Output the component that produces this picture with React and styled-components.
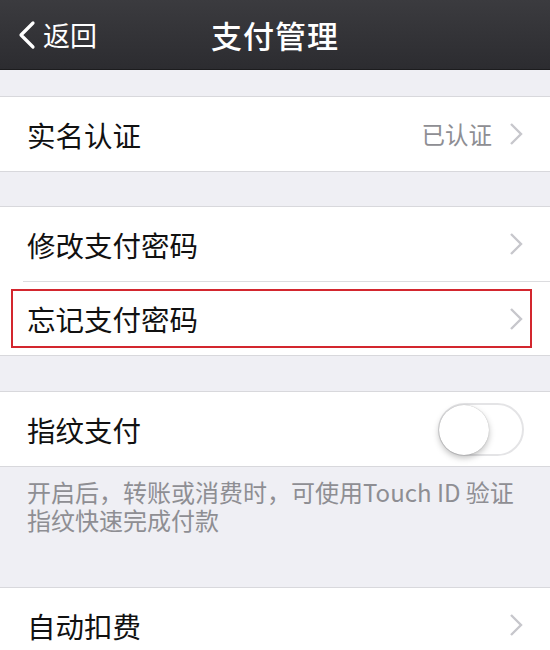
import styled, { createGlobalStyle } from "styled-components";

const GlobalStyle = createGlobalStyle`
  html, body {
    margin: 0;
    padding: 0;
    background: #efeff4;
  }
  body {
    font-family: "Noto Sans CJK SC", "Noto Sans", sans-serif;
  }
`;

const Page = styled.div`
  width: 550px;
  height: 650px;
  overflow: hidden;
  background: #efeff4;
`;

const NavBar = styled.header`
  height: 69px;
  border-bottom: 1px solid #1c1c1e;
  background: linear-gradient(#3b3b3f, #2c2c30);
  display: grid;
  grid-template-columns: 1fr auto 1fr;
  align-items: center;
  color: #fff;
`;

const BackButton = styled.div`
  display: flex;
  align-items: center;
  gap: 6px;
  padding-left: 17px;
  font-size: 27px;
  line-height: 1;
`;

const Title = styled.h1`
  margin: 0;
  font-size: 31px;
  font-weight: 500;
  letter-spacing: 1px;
`;

const Gap = styled.div`
  height: ${(p) => p.$h}px;
`;

const Group = styled.section`
  background: #fff;
  border-top: 1px solid #d8d8dc;
  border-bottom: 1px solid #d8d8dc;
`;

const Row = styled.div`
  position: relative;
  height: 74px;
  display: flex;
  align-items: center;
  padding: 0 26px 0 27px;
  box-sizing: border-box;
  & + & {
    border-top: 1px solid transparent;
  }
  & + &::before {
    content: "";
    position: absolute;
    top: -1px;
    left: 23px;
    right: 0;
    height: 1px;
    background: #dcdcdf;
  }
`;

const Label = styled.span`
  flex: 1;
  font-size: 28.5px;
  color: #111;
`;

const Detail = styled.span`
  font-size: 23.5px;
  color: #8e8e93;
  margin-right: 17px;
`;

const Chevron = styled.svg`
  display: block;
  flex: none;
  margin-right: 1px;
`;

const Toggle = styled.div`
  position: relative;
  flex: none;
  width: 86px;
  height: 53px;
  box-sizing: border-box;
  border: 2px solid #e4e4e6;
  border-radius: 27px;
  background: #fff;
`;

const Knob = styled.div`
  position: absolute;
  left: -1px;
  top: 0px;
  width: 50px;
  height: 50px;
  border-radius: 50%;
  background: #fff;
  box-shadow: 0 3px 6px rgba(0, 0, 0, 0.25), 0 0 1px rgba(0, 0, 0, 0.3);
`;

const Highlight = styled.div`
  position: absolute;
  left: 11px;
  right: 18px;
  top: 7px;
  bottom: 7px;
  border: 2px solid #d3262e;
  pointer-events: none;
`;

const Footnote = styled.p`
  margin: 0;
  height: 120px;
  box-sizing: border-box;
  padding: 11px 20px 0 27px;
  font-size: 24px;
  line-height: 28px;
  color: #8e8e93;
`;

function RightArrow() {
  return (
    <Chevron width="14" height="24" viewBox="0 0 14 24">
      <path d="M2 2 L12 12 L2 22" fill="none" stroke="#c7c7cc" strokeWidth="2.4" />
    </Chevron>
  );
}

export default function App() {
  return (
    <>
      <GlobalStyle />
      <Page>
        <NavBar>
          <BackButton>
            <svg width="20" height="30" viewBox="0 0 20 30">
              <path d="M16 3 L4 15 L16 27" fill="none" stroke="#fff" strokeWidth="3.2" strokeLinecap="round" strokeLinejoin="round" />
            </svg>
            返回
          </BackButton>
          <Title>支付管理</Title>
          <div />
        </NavBar>
        <Gap $h={26} />
        <Group>
          <Row>
            <Label>实名认证</Label>
            <Detail>已认证</Detail>
            <RightArrow />
          </Row>
        </Group>
        <Gap $h={34} />
        <Group>
          <Row>
            <Label>修改支付密码</Label>
            <RightArrow />
          </Row>
          <Row>
            <Label>忘记支付密码</Label>
            <RightArrow />
            <Highlight />
          </Row>
        </Group>
        <Gap $h={35} />
        <Group>
          <Row>
            <Label>指纹支付</Label>
            <Toggle>
              <Knob />
            </Toggle>
          </Row>
        </Group>
        <Footnote>
          开启后，转账或消费时，可使用Touch ID 验证
          <br />
          指纹快速完成付款
        </Footnote>
        <Group>
          <Row>
            <Label>自动扣费</Label>
            <RightArrow />
          </Row>
        </Group>
      </Page>
    </>
  );
}
